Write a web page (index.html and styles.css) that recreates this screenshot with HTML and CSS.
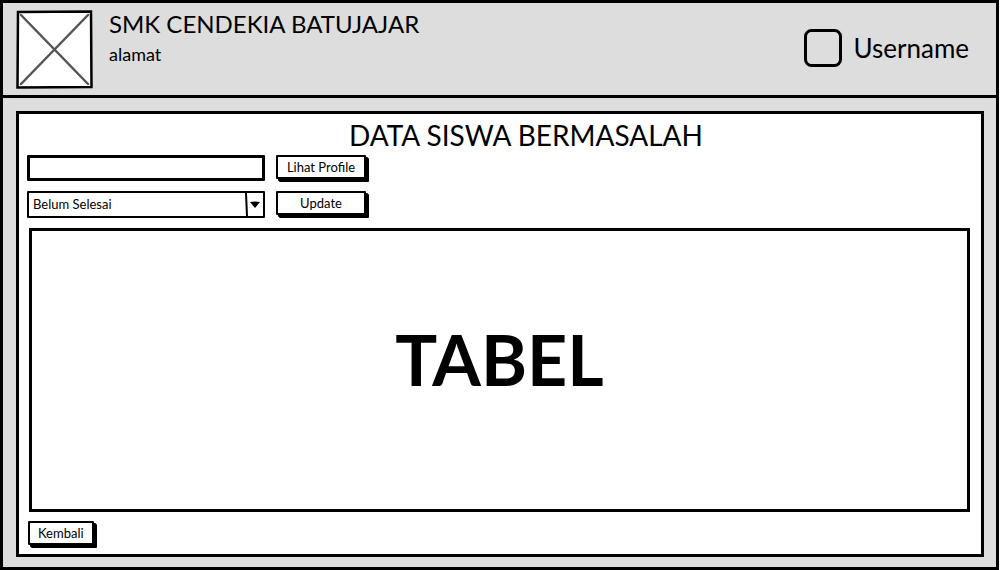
FILE: index.html
```html
<!DOCTYPE html>
<html lang="id">
<head>
<meta charset="utf-8">
<title>Data Siswa Bermasalah</title>
<link rel="stylesheet" href="styles.css">
</head>
<body>
<div class="frame">
  <header class="header">
    <svg class="logo" viewBox="0 0 77 79" aria-hidden="true">
      <path class="logo-box" d="M2 2 L75 1.5 L75.5 77 L1.5 77.5 Z"/>
      <path class="logo-cross" d="M5 5 L72 74 M72 5 L5 74"/>
    </svg>
    <div class="school">
      <h1 class="school-name">SMK CENDEKIA BATUJAJAR</h1>
      <p class="school-address">alamat</p>
    </div>
    <div class="user">
      <svg class="user-icon" viewBox="0 0 38 38" aria-hidden="true">
        <rect x="1.5" y="1.5" width="35" height="35" rx="6"/>
      </svg>
      <span class="user-name">Username</span>
    </div>
  </header>
  <main class="content">
    <section class="panel">
      <h2 class="title">DATA SISWA BERMASALAH</h2>
      <form class="filters">
        <input class="field" type="text" aria-label="Cari siswa">
        <button class="button" type="button">Lihat Profile</button>
        <div class="dropdown">
          <select class="select" aria-label="Status">
            <option>Belum Selesai</option>
          </select>
          <svg class="arrow" viewBox="0 0 18 23" aria-hidden="true">
            <path class="arrow-line" d="M1 0 L2 23"/>
            <path d="M5 9 Q10 8 15 9 L10 15 Z"/>
          </svg>
        </div>
        <button class="button" type="button">Update</button>
      </form>
      <div class="table-area">TABEL</div>
      <button class="button back" type="button">Kembali</button>
    </section>
  </main>
</div>
</body>
</html>
```
FILE: styles.css
```css
* {
  box-sizing: border-box;
}

body {
  margin: 0;
  background: #fff;
  color: #000;
  font-family: Lato, "Open Sans", sans-serif;
}

.frame {
  display: flex;
  flex-direction: column;
  min-height: 100vh;
  margin-right: 1px;
  border: 3px solid #000;
  background: #ddd;
}

.header {
  display: flex;
  align-items: flex-start;
  gap: 16px;
  padding: 7px 27px 6px 13px;
  border-bottom: 3px solid #000;
}

.logo {
  flex: none;
  width: 77px;
  height: 79px;
}

.logo-box {
  fill: #fff;
  stroke: #000;
  stroke-width: 2.5;
}

.logo-cross {
  fill: none;
  stroke: #555;
  stroke-width: 2.5;
  stroke-linecap: round;
}

.school-name {
  margin: 0;
  font-size: 24px;
  line-height: 28px;
  font-weight: 400;
}

.school-address {
  margin: 6px 0 0;
  font-size: 18px;
  line-height: 20px;
}

.user {
  display: flex;
  align-items: center;
  align-self: center;
  gap: 12px;
  margin-left: auto;
  padding-bottom: 4px;
}

.user-icon {
  width: 38px;
  height: 38px;
  fill: none;
  stroke: #000;
  stroke-width: 3;
}

.user-name {
  font-size: 26px;
  line-height: 30px;
}

.content {
  display: flex;
  flex: 1;
  padding: 13px 12px 10px 13px;
}

.panel {
  display: flex;
  flex: 1;
  flex-direction: column;
  padding: 6px 11px 9px 9px;
  border: 3px solid #000;
  background: #fff;
}

.title {
  margin: 0;
  padding: 0 0 5px 54px;
  font-size: 28px;
  line-height: 30px;
  font-weight: 400;
  text-align: center;
}

.filters {
  display: grid;
  grid-template-columns: 238px 90px;
  gap: 10px 11px;
  margin-left: -1px;
}

.field,
.select {
  width: 100%;
  height: 27px;
  padding: 0 4px;
  border: 2px solid #000;
  border-radius: 1px;
  background: #fff;
  color: #000;
  font: inherit;
  font-size: 13px;
}

.field {
  height: 26px;
  border-width: 3px;
}

.select {
  appearance: none;
  padding-bottom: 2px;
}

.dropdown {
  position: relative;
}

.arrow {
  position: absolute;
  top: 2px;
  right: 2px;
  width: 18px;
  height: 23px;
  pointer-events: none;
}

.arrow-line {
  stroke: #000;
  stroke-width: 2;
}

.button {
  height: 24px;
  padding: 0 8px;
  border: 2px solid #000;
  border-radius: 1px;
  background: #fff;
  box-shadow: 2px 2px 0 #000, 3px 3px 0 #000;
  color: #000;
  font: inherit;
  font-size: 13px;
  line-height: 18px;
  white-space: nowrap;
}

.table-area {
  display: flex;
  flex: 1;
  align-items: center;
  justify-content: center;
  margin: 10px 0 9px 1px;
  padding-bottom: 22px;
  border: 3px solid #000;
  font-size: 70px;
  line-height: 84px;
  font-weight: 700;
}

.back {
  align-self: flex-start;
}
```
